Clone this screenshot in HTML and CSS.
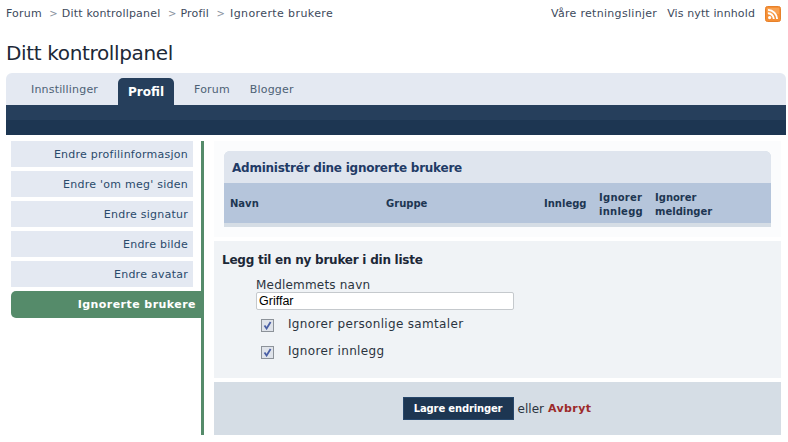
FILE: index.html
```html
<!DOCTYPE html>
<html lang="no">
<head>
<meta charset="utf-8">
<title>Ditt kontrollpanel</title>
<link rel="stylesheet" href="styles.css">
</head>
<body>
<div class="topbar">
  <nav class="crumbs">
    <a>Forum</a><span class="sep">&gt;</span><a>Ditt kontrollpanel</a><span class="sep">&gt;</span><a>Profil</a><span class="sep">&gt;</span><a class="last">Ignorerte brukere</a>
  </nav>
  <div class="toplinks">
    <a class="guide">Våre retningslinjer</a>
    <a class="newest">Vis nytt innhold</a>
    <svg class="rss" width="16" height="16" viewBox="0 0 16 16"><rect x="0.5" y="0.5" width="15" height="15" rx="2" fill="#f58f35" stroke="#e7812a"/><rect x="2" y="2" width="12" height="6" fill="#fbb56f" opacity=".5"/><circle cx="4.6" cy="11.6" r="1.6" fill="#fff"/><path d="M3 7.2a6 6 0 0 1 5.8 5.8M3 3.9a9.3 9.3 0 0 1 9.1 9.1" fill="none" stroke="#fff" stroke-width="1.9"/></svg>
  </div>
</div>
<h1 class="title">Ditt kontrollpanel</h1>
<div class="tabs">
  <a class="tab first">Innstillinger</a>
  <a class="tab active">Profil</a>
  <a class="tab">Forum</a>
  <a class="tab">Blogger</a>
</div>
<div class="band"></div>
<div class="columns">
  <ul class="side">
    <li>Endre profilinformasjon</li>
    <li>Endre 'om meg' siden</li>
    <li>Endre signatur</li>
    <li>Endre bilde</li>
    <li>Endre avatar</li>
    <li class="current">Ignorerte brukere</li>
  </ul>
  <main class="main">
    <section class="listpanel">
      <div class="listbox">
        <h2 class="listhead">Administrér dine ignorerte brukere</h2>
        <div class="thead">
          <span class="c-navn">Navn</span>
          <span class="c-gruppe">Gruppe</span>
          <span class="c-innlegg">Innlegg</span>
          <span class="c-ign1">Ignorer innlegg</span>
          <span class="c-ign2">Ignorer meldinger</span>
        </div>
      </div>
    </section>
    <section class="formpanel">
      <h3 class="formhead">Legg til en ny bruker i din liste</h3>
      <label class="namelabel" for="navn">Medlemmets navn</label>
      <input class="nameinput" id="navn" type="text" value="Griffar">
      <div class="check"><span class="box"><svg width="9" height="9" viewBox="0 0 9 9"><path d="M1.5 4.5 3.6 7.5 7.6 1" fill="none" stroke="#4a5fa5" stroke-width="1.8"/></svg></span><span class="checktext">Ignorer personlige samtaler</span></div>
      <div class="check"><span class="box"><svg width="9" height="9" viewBox="0 0 9 9"><path d="M1.5 4.5 3.6 7.5 7.6 1" fill="none" stroke="#4a5fa5" stroke-width="1.8"/></svg></span><span class="checktext">Ignorer innlegg</span></div>
    </section>
    <section class="actions">
      <button class="save" type="button">Lagre endringer</button>
      <span class="or">eller</span>
      <a class="cancel">Avbryt</a>
    </section>
  </main>
</div>
</body>
</html>
```
FILE: styles.css
```css
* { box-sizing: border-box; }
html, body { margin: 0; padding: 0; }
body {
  width: 788px;
  height: 442px;
  overflow: hidden;
  background: #fff;
  color: #1c2837;
  font-family: "DejaVu Sans", Verdana, sans-serif;
  font-size: 11px;
}
.topbar {
  display: flex;
  justify-content: space-between;
  align-items: center;
  height: 28px;
  padding: 0 7px 1px 6px;
  color: #3d4a5c;
}
.crumbs { display: flex; letter-spacing: .18px; }
.sep { color: #8a93a0; margin: 0 4px 0 7.5px; font-size: 10px; line-height: 13px; }
.last { margin-left: 1px; letter-spacing: .4px; }
.toplinks { display: flex; align-items: center; }
.toplinks a { margin-right: 10px; }
.guide { letter-spacing: .3px; }
.newest { letter-spacing: .12px; }
.rss { display: block; }
.title {
  margin: 0;
  height: 45px;
  padding: 12px 0 0 6px;
  font-size: 20px;
  line-height: 26px;
  font-weight: 400;
  letter-spacing: -.35px;
  color: #1c2837;
}
.tabs {
  display: flex;
  align-items: flex-end;
  height: 32px;
  margin: 0 2px 0 6px;
  background: #e4e9f2;
  border-radius: 6px 6px 0 0;
}
.tab {
  height: 27px;
  padding-top: 5px;
  color: #4d6175;
  letter-spacing: .18px;
  line-height: 13px;
}
.tab.first { margin-left: 25px; margin-right: 20px; }
.tab.active {
  width: 56px;
  margin-right: 20px;
  padding-top: 6px;
  background: #263f5c;
  border-radius: 5px 5px 0 0;
  color: #fff;
  font-weight: 700;
  font-size: 12px;
  text-align: center;
  letter-spacing: 0;
  line-height: 16px;
}
.tab.active + .tab { margin-right: 20px; }
.band {
  height: 30px;
  margin: 0 2px 0 6px;
  background: linear-gradient(#263f5c 0 15px, #1d3652 15px);
}
.columns {
  display: flex;
  padding: 6px 7px 0 11px;
  height: 300px;
}
.side {
  list-style: none;
  margin: 0;
  padding: 0;
  width: 193px;
  height: 294px;
  display: flex;
  flex-direction: column;
  gap: 4px;
  border-right: 3px solid #558b6a;
  flex: none;
}
.side li {
  width: 182px;
  height: 26px;
  padding-right: 5px;
  background: #e4e9f2;
  color: #2a4a6b;
  text-align: right;
  line-height: 28px;
  letter-spacing: .25px;
}
.side li.current {
  width: 190px;
  height: 27px;
  padding-right: 5px;
  background: #558b6a;
  border-radius: 5px 0 0 5px;
  color: #fff;
  font-weight: 700;
  letter-spacing: .45px;
  line-height: 28px;
}
.main {
  margin-left: 10px;
  width: 567px;
  height: 294px;
  display: flex;
  flex-direction: column;
  gap: 4px;
}
.listpanel {
  height: 96px;
  padding: 10px;
  background: #fbfcfd;
}
.listbox {
  height: 76px;
  background: #d5dde5;
  border-radius: 6px 6px 0 0;
  overflow: hidden;
}
.listhead {
  margin: 0;
  height: 32px;
  padding-left: 8px;
  background: #dfe5ee;
  color: #1f3b66;
  font-size: 12px;
  font-weight: 700;
  letter-spacing: -.24px;
  line-height: 35px;
}
.thead {
  display: grid;
  grid-template-columns: 156px 158px 55px 56px 1fr;
  align-items: center;
  height: 40px;
  padding: 2px 0 0 6px;
  background: #b5c5db;
  color: #1d3652;
  font-size: 10px;
  font-weight: 700;
  line-height: 14px;
}
.c-ign1, .c-ign2 { margin-top: 2px; }
.c-ign1 { width: 50px; letter-spacing: .25px; }
.c-ign2 { width: 66px; }
.formpanel {
  height: 137px;
  padding: 12px 8px 0;
  background: #f0f3f6;
}
.formhead {
  margin: 0;
  font-size: 12px;
  line-height: 15px;
  font-weight: 700;
  letter-spacing: -.24px;
  color: #1c2837;
}
.namelabel {
  display: block;
  margin: 10px 0 0 34px;
  font-size: 12px;
  line-height: 14px;
  letter-spacing: .2px;
  color: #2b3440;
}
.nameinput {
  display: block;
  width: 258px;
  height: 18px;
  margin: 0 0 0 34px;
  padding: 0 2px;
  border: 1px solid #c5c9cd;
  border-radius: 2px;
  background: #fff;
  color: #000;
  font-family: "Liberation Sans", Arial, sans-serif;
  font-size: 12.5px;
  outline: none;
}
.check {
  display: flex;
  align-items: flex-start;
  height: 27px;
  margin-left: 39px;
  font-size: 12px;
  line-height: 14px;
  color: #2b3440;
}
.checktext { padding-top: 1px; letter-spacing: .33px; }
.nameinput + .check { margin-top: 6px; }
.box {
  width: 13px;
  height: 13px;
  margin: 3px 14px 0 0;
  flex: none;
  display: flex;
  align-items: center;
  justify-content: center;
  border: 1px solid #8c9299;
  background: #dfe3ea;
}
.box svg { display: block; }
.actions {
  height: 53px;
  display: flex;
  align-items: center;
  justify-content: center;
  padding: 0 1px 0 0;
  background: #d5dde5;
  font-size: 12px;
  color: #2b3440;
}
.save {
  width: 111px;
  height: 23px;
  padding: 0;
  border: 1px solid #27476b;
  background: #1d3652;
  color: #fff;
  font-family: inherit;
  font-size: 10px;
  font-weight: 700;
  letter-spacing: -.15px;
}
.or { margin: 0 4px; }
.cancel { color: #9c2a2a; font-size: 11px; font-weight: 700; letter-spacing: .4px; }
```
